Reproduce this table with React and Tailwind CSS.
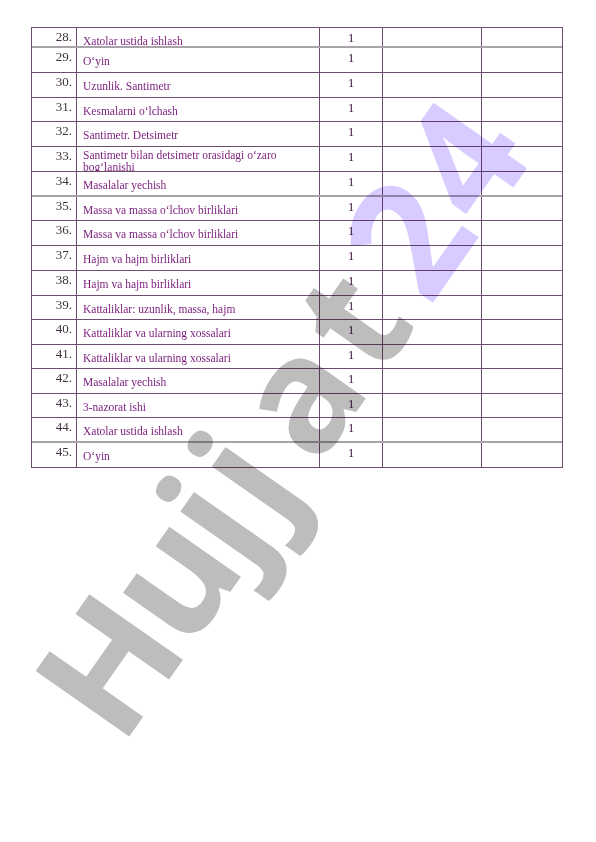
import React from 'react';

// lesson plan rows (continuation page)
const rows = [
  { n: '28.', t: 'Xatolar ustida ishlash', h: 20, soft: true },
  { n: '29.', t: 'O‘yin', h: 25 },
  { n: '30.', t: 'Uzunlik. Santimetr', h: 25 },
  { n: '31.', t: 'Kesmalarni o‘lchash', h: 24 },
  { n: '32.', t: 'Santimetr. Detsimetr', h: 25 },
  { n: '33.', t: 'Santimetr bilan detsimetr orasidagi o‘zaro bog‘lanishi', h: 25, two: true },
  { n: '34.', t: 'Masalalar yechish', h: 25, soft: true },
  { n: '35.', t: 'Massa va massa o‘lchov birliklari', h: 24 },
  { n: '36.', t: 'Massa va massa o‘lchov birliklari', h: 25 },
  { n: '37.', t: 'Hajm va hajm birliklari', h: 25 },
  { n: '38.', t: 'Hajm va hajm birliklari', h: 25 },
  { n: '39.', t: 'Kattaliklar: uzunlik, massa, hajm', h: 24 },
  { n: '40.', t: 'Kattaliklar va ularning xossalari', h: 25 },
  { n: '41.', t: 'Kattaliklar va ularning xossalari', h: 24 },
  { n: '42.', t: 'Masalalar yechish', h: 25 },
  { n: '43.', t: '3-nazorat ishi', h: 24 },
  { n: '44.', t: 'Xatolar ustida ishlash', h: 25, soft: true },
  { n: '45.', t: 'O‘yin', h: 24 },
];

const Row = ({ row }) => (
  <div
    className={
      row.soft
        ? 'grid grid-cols-[45px_243px_63px_99px_81px] border-b-2 border-[#aaa2aa]'
        : 'grid grid-cols-[45px_243px_63px_99px_81px] border-b border-[#6e4e6e]'
    }
    style={{ height: row.h }}
  >
    <div className="border-r border-[#6e4e6e] pr-[4px] pt-[2px] text-right text-[13px] leading-[14px] text-[#3e323e]">
      {row.n}
    </div>
    <div
      className={
        row.two
          ? 'border-r border-[#6e4e6e] overflow-hidden pl-[6px] pt-[2px] text-[11.5px] leading-[12px] text-[#7a1c7c]'
          : 'border-r border-[#6e4e6e] overflow-hidden pl-[6px] pt-[6px] text-[11.5px] leading-[14px] text-[#7a1c7c]'
      }
    >
      {row.t}
    </div>
    <div className="border-r border-[#6e4e6e] pt-[3px] text-center text-[12.5px] leading-[14px] text-[#3a0f3c]">
      1
    </div>
    <div className="border-r border-[#6e4e6e]" />
    <div />
  </div>
);

export default function App() {
  return (
    <div className="relative w-[596px] h-[842px] overflow-hidden bg-white font-['Liberation_Serif',serif]">
      <div className="pl-[31px] pt-[27px]">
        <div className="w-[532px] border-t border-l border-r border-b border-[#6e4e6e] [&>div:last-child]:border-b-0">
          {rows.map((r) => (
            <Row key={r.n} row={r} />
          ))}
        </div>
      </div>

      {/* watermark */}
      <div className="pointer-events-none absolute left-[278px] top-[416px] -translate-x-1/2 -translate-y-1/2 rotate-[-55deg] whitespace-nowrap font-['Open_Sans',sans-serif] text-[160px] font-bold leading-none mix-blend-multiply">
        <span className="text-[#bdbdbd]">
          <span className="mr-[-6px]">H</span>
          <span className="mr-[-6px]">u</span>
          <span className="mr-[6px]">j</span>
          <span className="mr-[23px]">j</span>
          <span className="mr-[10px]">a</span>
          <span className="mr-[19px]">t</span>
        </span>
        <span className="text-[#d8cbff]">
          <span className="mr-[4px]">2</span>
          <span>4</span>
        </span>
      </div>
    </div>
  );
}
